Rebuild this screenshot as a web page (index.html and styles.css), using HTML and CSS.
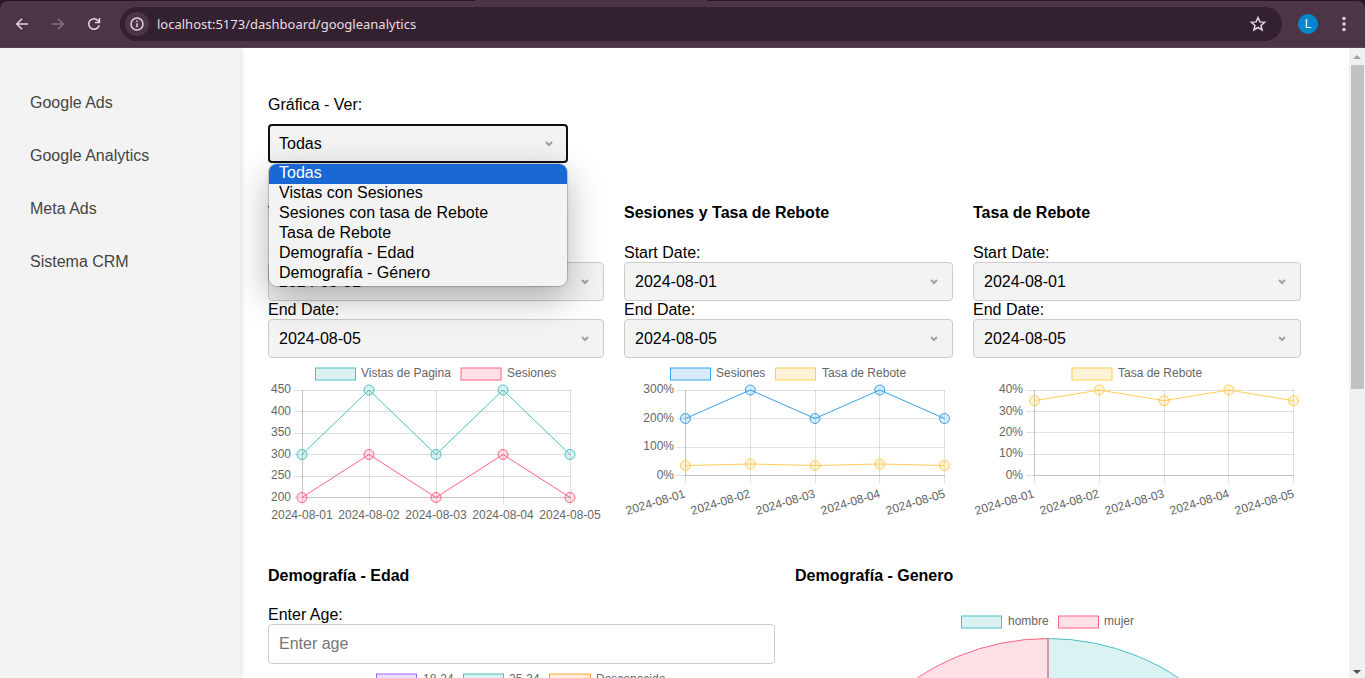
FILE: index.html
```html
<!DOCTYPE html>
<html lang="es">
<head>
<meta charset="utf-8">
<title>Google Analytics</title>
<link rel="stylesheet" href="styles.css">
</head>
<body>
<header class="browser">
  <div class="tabstrip"><span class="active-tab"></span></div>
  <div class="toolbar">
    <button class="nav-btn" aria-label="Atrás"><svg width="16" height="16" viewBox="0 0 16 16"><path d="M14 8H3M8 2.8 2.8 8 8 13.2"/></svg></button>
    <button class="nav-btn dim" aria-label="Adelante"><svg width="16" height="16" viewBox="0 0 16 16"><path d="M2 8h11M8 2.8 13.2 8 8 13.2"/></svg></button>
    <button class="nav-btn" aria-label="Recargar"><svg width="16" height="16" viewBox="0 0 16 16"><path d="M13.2 9.2A5.3 5.3 0 1 1 12 4.400L13.600 6"/><path d="M13.500 2v4.500H9"/></svg></button>
    <div class="address">
      <button class="info" aria-label="Información del sitio"><svg width="16" height="16" viewBox="0 0 16 16"><circle cx="8" cy="8" r="6"/><path d="M8 7.200v4M8 4.500v1.500"/></svg></button>
      <input class="url" aria-label="Dirección" value="localhost:5173/dashboard/googleanalytics">
      <button class="star" aria-label="Favorito"><svg width="18" height="18" viewBox="0 0 18 18"><path d="M9 2.600 10.900 6.900 15.600 7.300 12 10.400 13.100 15 9 12.500 4.900 15 6 10.400 2.400 7.300 7.100 6.900Z"/></svg></button>
    </div>
    <button class="avatar" aria-label="Perfil">L</button>
    <button class="menu" aria-label="Menú"><svg width="16" height="16" viewBox="0 0 16 16"><circle cx="8" cy="2.500" r="1.700"/><circle cx="8" cy="8" r="1.700"/><circle cx="8" cy="13.500" r="1.700"/></svg></button>
  </div>
</header>

<div class="page">
  <nav class="sidebar">
    <a href="#">Google Ads</a>
    <a href="#">Google Analytics</a>
    <a href="#">Meta Ads</a>
    <a href="#">Sistema CRM</a>
  </nav>

  <main class="content">
    <div class="filter">
      <label for="view">Gráfica - Ver:</label>
      <div class="field">
        <select id="view" class="control focused"><option>Todas</option></select>
        <svg class="chevron" width="8" height="6" viewBox="0 0 8 6"><path d="M1 1l3 3 3-3"/></svg>
        <ul class="options" role="listbox" aria-label="Gráfica">
          <li class="selected" role="option" aria-selected="true">Todas</li>
          <li role="option">Vistas con Sesiones</li>
          <li role="option">Sesiones con tasa de Rebote</li>
          <li role="option">Tasa de Rebote</li>
          <li role="option">Demografía - Edad</li>
          <li role="option">Demografía - Género</li>
        </ul>
      </div>
    </div>

    <div class="row three">
      <section>
        <h4>Vistas y Sesiones</h4>
        <label for="s1">Start Date:</label>
        <div class="field"><select id="s1" class="control"><option>2024-08-01</option></select><svg class="chevron" width="8" height="6" viewBox="0 0 8 6"><path d="M1 1l3 3 3-3"/></svg></div>
        <label for="e1">End Date:</label>
        <div class="field"><select id="e1" class="control"><option>2024-08-05</option></select><svg class="chevron" width="8" height="6" viewBox="0 0 8 6"><path d="M1 1l3 3 3-3"/></svg></div>
        <svg class="chart" viewBox="0 0 336 173">
          <rect class="teal" x="47.500" y="10" width="40" height="12"/><text x="93" y="19">Vistas de Pagina</text>
          <rect class="pink" x="193" y="10" width="40" height="12"/><text x="239" y="19">Sesiones</text>
          <path class="grid" d="M26 32.500H303M26 53.500H303M26 75.500H303M26 96.500H303M26 118.500H303M26 139.500H303M34.500 32V147M101.500 32V147M168.500 32V147M235.500 32V147M302.500 32V147"/>
          <path class="grid" d="M34.500 32V140M34 139.500H303"/>
          <g class="y"><text x="23" y="35">450</text><text x="23" y="57">400</text><text x="23" y="78">350</text><text x="23" y="100">300</text><text x="23" y="121">250</text><text x="23" y="143">200</text></g>
          <g class="x"><text x="34" y="161">2024-08-01</text><text x="101" y="161">2024-08-02</text><text x="168" y="161">2024-08-03</text><text x="235" y="161">2024-08-04</text><text x="302" y="161">2024-08-05</text></g>
          <g class="pink"><path class="line" d="M34 139.500 101 96.500 168 139.500 235 96.500 302 139.500"/><circle cx="34" cy="139.500" r="5"/><circle cx="101" cy="96.500" r="5"/><circle cx="168" cy="139.500" r="5"/><circle cx="235" cy="96.500" r="5"/><circle cx="302" cy="139.500" r="5"/></g>
          <g class="teal"><path class="line" d="M34 96.500 101 32 168 96.500 235 32 302 96.500"/><circle cx="34" cy="96.500" r="5"/><circle cx="101" cy="32" r="5"/><circle cx="168" cy="96.500" r="5"/><circle cx="235" cy="32" r="5"/><circle cx="302" cy="96.500" r="5"/></g>
        </svg>
      </section>

      <section>
        <h4>Sesiones y Tasa de Rebote</h4>
        <label for="s2">Start Date:</label>
        <div class="field"><select id="s2" class="control"><option>2024-08-01</option></select><svg class="chevron" width="8" height="6" viewBox="0 0 8 6"><path d="M1 1l3 3 3-3"/></svg></div>
        <label for="e2">End Date:</label>
        <div class="field"><select id="e2" class="control"><option>2024-08-05</option></select><svg class="chevron" width="8" height="6" viewBox="0 0 8 6"><path d="M1 1l3 3 3-3"/></svg></div>
        <svg class="chart" viewBox="0 0 329 173">
          <rect class="blue" x="46.500" y="10" width="40" height="12"/><text x="92" y="19">Sesiones</text>
          <rect class="yellow" x="151.500" y="10" width="40" height="12"/><text x="198" y="19">Tasa de Rebote</text>
          <path class="grid" d="M53 32.500H321M53 60.500H321M53 89.500H321M53 117.500H321M61.500 32V125M126.500 32V125M191.500 32V125M255.500 32V125M320.500 32V125"/>
          <path class="grid" d="M61.500 32V118M61 117.500H321"/>
          <g class="y"><text x="50" y="35">300%</text><text x="50" y="64">200%</text><text x="50" y="92">100%</text><text x="50" y="121">0%</text></g>
          <g class="y"><text transform="translate(62 139) rotate(-17)">2024-08-01</text><text transform="translate(127 139) rotate(-17)">2024-08-02</text><text transform="translate(192 139) rotate(-17)">2024-08-03</text><text transform="translate(257 139) rotate(-17)">2024-08-04</text><text transform="translate(322 139) rotate(-17)">2024-08-05</text></g>
          <g class="yellow"><path class="line" d="M61.500 107.500 126.300 106 191 107.500 255.800 106 320.500 107.500"/><circle cx="61.500" cy="107.500" r="5"/><circle cx="126.300" cy="106" r="5"/><circle cx="191" cy="107.500" r="5"/><circle cx="255.800" cy="106" r="5"/><circle cx="320.500" cy="107.500" r="5"/></g>
          <g class="blue"><path class="line" d="M61.500 60.500 126.300 32 191 60.500 255.800 32 320.500 60.500"/><circle cx="61.500" cy="60.500" r="5"/><circle cx="126.300" cy="32" r="5"/><circle cx="191" cy="60.500" r="5"/><circle cx="255.800" cy="32" r="5"/><circle cx="320.500" cy="60.500" r="5"/></g>
        </svg>
      </section>

      <section>
        <h4>Tasa de Rebote</h4>
        <label for="s3">Start Date:</label>
        <div class="field"><select id="s3" class="control"><option>2024-08-01</option></select><svg class="chevron" width="8" height="6" viewBox="0 0 8 6"><path d="M1 1l3 3 3-3"/></svg></div>
        <label for="e3">End Date:</label>
        <div class="field"><select id="e3" class="control"><option>2024-08-05</option></select><svg class="chevron" width="8" height="6" viewBox="0 0 8 6"><path d="M1 1l3 3 3-3"/></svg></div>
        <svg class="chart" viewBox="0 0 328 173">
          <rect class="yellow" x="99" y="10" width="40" height="12"/><text x="145" y="19">Tasa de Rebote</text>
          <path class="grid" d="M53 32.500H321M53 53.500H321M53 74.500H321M53 96.500H321M53 117.500H321M61.500 32V125M126.500 32V125M191.500 32V125M255.500 32V125M320.500 32V125"/>
          <path class="grid" d="M61.500 32V118M61 117.500H321"/>
          <g class="y"><text x="50" y="35">40%</text><text x="50" y="57">30%</text><text x="50" y="78">20%</text><text x="50" y="99">10%</text><text x="50" y="121">0%</text></g>
          <g class="y"><text transform="translate(62 139) rotate(-17)">2024-08-01</text><text transform="translate(127 139) rotate(-17)">2024-08-02</text><text transform="translate(192 139) rotate(-17)">2024-08-03</text><text transform="translate(257 139) rotate(-17)">2024-08-04</text><text transform="translate(322 139) rotate(-17)">2024-08-05</text></g>
          <g class="yellow"><path class="line" d="M61.500 42.700 126.300 32 191 42.700 255.800 32 320.500 42.700"/><circle cx="61.500" cy="42.700" r="5"/><circle cx="126.300" cy="32" r="5"/><circle cx="191" cy="42.700" r="5"/><circle cx="255.800" cy="32" r="5"/><circle cx="320.500" cy="42.700" r="5"/></g>
        </svg>
      </section>
    </div>

    <div class="row two">
      <section>
        <h4>Demografía - Edad</h4>
        <label for="age">Enter Age:</label>
        <input id="age" class="control age" type="text" placeholder="Enter age">
        <svg class="chart" viewBox="0 0 507 260">
          <rect class="purple" x="108.500" y="10" width="40" height="12"/><text x="155" y="19">18-24</text>
          <rect class="teal" x="195.500" y="10" width="40" height="12"/><text x="241" y="19">25-34</text>
          <rect class="orange" x="281.500" y="10" width="41" height="12"/><text x="328" y="19">Desconocido</text>
        </svg>
      </section>
      <section>
        <h4>Demografía - Genero</h4>
        <svg class="chart" viewBox="0 0 506 506">
          <rect class="teal" x="166.500" y="10" width="40" height="12"/><text x="213" y="19">hombre</text>
          <rect class="pink" x="263.500" y="10" width="40" height="12"/><text x="309" y="19">mujer</text>
          <path class="teal" d="M253 268.500V32.500A236 236 0 0 1 253 504.500Z"/>
          <path class="pink" d="M253 268.500V504.500A236 236 0 0 1 253 32.500Z"/>
        </svg>
      </section>
    </div>
  </main>

  <div class="scrollbar">
    <svg width="16" height="17" viewBox="0 0 16 17"><path fill="#a3a3a3" d="M4 11 8 7l4 4Z"/></svg>
    <span class="thumb"></span>
    <span class="track"></span>
    <svg width="16" height="17" viewBox="0 0 16 17"><path fill="#505050" d="M4 9h8l-4 4Z"/></svg>
  </div>
</div>
</body>
</html>
```

FILE: styles.css
```css
* { box-sizing: border-box; }

body {
  margin: 0;
  height: 100vh;
  display: flex;
  flex-direction: column;
  overflow: hidden;
  background: #fff;
  color: #000;
  font: 16px/18px "Liberation Sans", Arial, sans-serif;
}

button {
  border: 0;
  padding: 0;
  background: none;
  display: flex;
  align-items: center;
  justify-content: center;
}

/* Browser bar */
.browser { background: #2a1527; flex: none; }
.tabstrip { height: 1px; display: flex; padding-left: 475px; }
.active-tab { width: 232px; background: #4b3546; }
.toolbar {
  height: 47px;
  display: flex;
  align-items: center;
  background: #4b3546;
  border-bottom: 1px solid #58464f;
  border-radius: 8px 8px 0 0;
  padding: 0 13px 0 14px;
}
.nav-btn { width: 16px; height: 16px; margin-right: 20px; }
.nav-btn svg, .info svg, .star svg {
  fill: none;
  stroke: #e6d3e0;
  stroke-width: 1.5;
}
.nav-btn.dim svg { stroke: #88737f; }
.address {
  flex: 1;
  height: 34px;
  margin-left: -2px;
  display: flex;
  align-items: center;
  gap: 8px;
  padding: 0 15px 0 5px;
  border-radius: 17px;
  background: #34212f;
}
.info { width: 24px; height: 24px; border-radius: 12px; background: #4b3546; }
.url {
  flex: 1;
  min-width: 0;
  border: 0;
  padding: 0;
  outline: 0;
  background: none;
  color: #e8dde5;
  font: 13px/20px "Noto Sans", "Open Sans", sans-serif;
}
.star { width: 18px; height: 18px; }
.avatar {
  width: 20px;
  height: 20px;
  margin: 0 18px 0 16px;
  border-radius: 10px;
  background: #0288d1;
  color: #fff;
  font: 12px/20px Roboto, sans-serif;
}
.menu svg { fill: #e6d3e0; }

/* Page frame */
.page { flex: 1; min-height: 0; display: flex; }
.sidebar {
  flex: none;
  width: 240px;
  padding: 46px 30px;
  display: flex;
  flex-direction: column;
  gap: 35px;
  background: #f3f3f3;
  box-shadow: 2px 0 5px rgba(0, 0, 0, .1);
}
.sidebar a { color: #444; text-decoration: none; }
.content { flex: 1; min-width: 0; padding: 48px 48px 0 28px; overflow: hidden; }

.scrollbar {
  flex: none;
  width: 16px;
  display: flex;
  flex-direction: column;
  background: #f1f1f1;
}
.scrollbar svg { flex: none; }
.thumb { flex: 324; margin: 0 1px 0 2px; background: #c1c1c1; }
.track { flex: 272; }

/* Form fields */
label { display: block; }
.field { position: relative; }
.control {
  display: block;
  width: 100%;
  height: 39px;
  padding: 0 10px;
  appearance: none;
  border: 1px solid #ccc;
  border-radius: 4px;
  background: #f3f3f3;
  color: #000;
  font: inherit;
}
.focused { border: 2px solid #101010; padding: 0 9px; }
.age { height: 40px; background: #fff; }
.age::placeholder { color: #757575; }
.chevron {
  position: absolute;
  right: 15px;
  top: 17px;
  fill: none;
  stroke: #a0a0a0;
  stroke-width: 2;
}

.filter { width: 300px; margin-bottom: 40px; }
.filter label { margin-bottom: 10px; }
.options {
  position: absolute;
  z-index: 2;
  top: 40px;
  left: 1px;
  right: 1px;
  margin: 0;
  padding: 0 0 2px;
  list-style: none;
  overflow: hidden;
  border-radius: 8px;
  background: #f3f3f3;
  box-shadow: 0 0 1px 1px rgba(0, 0, 0, .2), 0 12px 36px rgba(0, 0, 0, .3);
}
.options li { height: 20px; padding: 0 10px; }
.options .selected { background: #1967d2; color: #fff; }

/* Chart panels */
.row { display: grid; column-gap: 20px; margin-bottom: 35px; }
.three { grid-template-columns: 336fr 329fr 328fr; }
.two { grid-template-columns: 507fr 506fr; }
h4 { margin: 0 0 21px; font-size: 16px; line-height: 19px; }
.three h4 { margin-bottom: 22px; }
.chart { display: block; width: 100%; height: auto; }
.chart text { fill: #666; font-size: 12px; }
.y text { text-anchor: end; }
.x text { text-anchor: middle; }
.grid { stroke: rgba(0, 0, 0, .12); fill: none; }
.chart .line { fill: none; }
.teal { stroke: #4bc0c0; fill: rgba(75, 192, 192, .2); }
.pink { stroke: #ff6384; fill: rgba(255, 99, 132, .2); }
.blue { stroke: #36a2eb; fill: rgba(54, 162, 235, .2); }
.yellow { stroke: #ffce56; fill: rgba(255, 206, 86, .24); }
.purple { stroke: #9966ff; fill: rgba(153, 102, 255, .2); }
.orange { stroke: #ff9f40; fill: rgba(255, 159, 64, .2); }
```
